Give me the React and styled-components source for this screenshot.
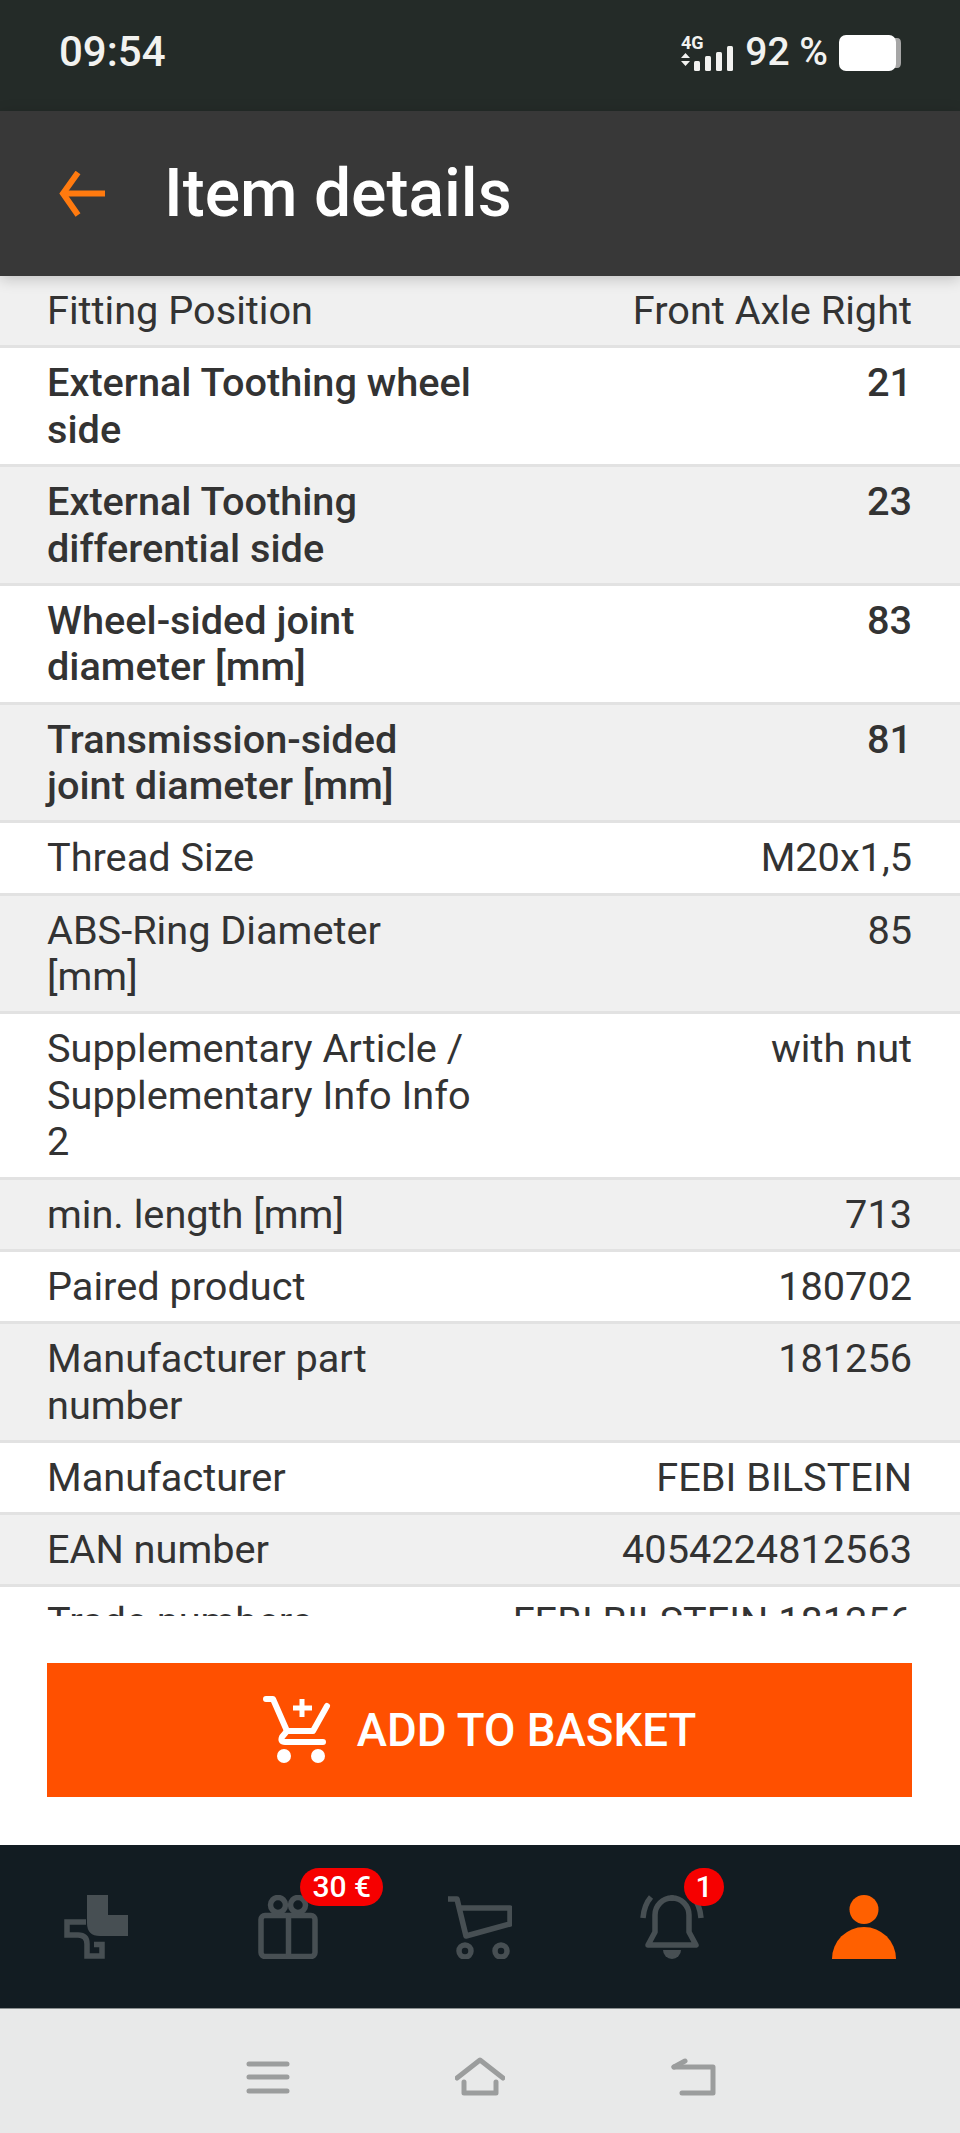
import styled, { createGlobalStyle } from 'styled-components';

const GlobalStyle = createGlobalStyle`
	html,
	body {
		margin: 0;
		padding: 0;
		background: #fff;
	}

	* {
		box-sizing: border-box;
	}
`;

const Screen = styled.div`
	width: 960px;
	height: 2133px;
	display: flex;
	flex-direction: column;
	font-family: Roboto, 'Liberation Sans', sans-serif;
	color: #333;
	overflow: hidden;
`;

const StatusBar = styled.div`
	flex: 0 0 111px;
	background: #242b28;
	color: #f2f2f0;
	display: flex;
	align-items: flex-start;
	justify-content: space-between;
	padding: 29px 58px 0 59px;
`;

const StatusTime = styled.div`
	font-size: 42px;
	line-height: 46px;
	font-weight: 500;
`;

const StatusRight = styled.div`
	display: flex;
	align-items: flex-start;
	gap: 10px;
`;

const StatusPercent = styled.div`
	font-size: 39px;
	line-height: 46px;
	font-weight: 500;
`;

const Header = styled.header`
	flex: 0 0 165px;
	background: #383838;
	display: flex;
	align-items: center;
	gap: 57px;
	padding-left: 59px;
	position: relative;
	z-index: 2;
	box-shadow: 0 3px 14px rgba(0, 0, 0, 0.2);
`;

const Title = styled.h1`
	margin: 0;
	color: #fff;
	font-size: 66px;
	line-height: 72px;
	font-weight: 500;
`;

const List = styled.div`
	flex: 1 1 0;
	min-height: 0;
	overflow: hidden;
`;

const Row = styled.div`
	display: grid;
	grid-template-columns: 1fr 1fr;
	padding: 12px 48px 10.75px 47px;
	border-bottom: 3px solid #e2e2e2;
	background: ${({ $shaded }) => ($shaded ? '#f0f0f0' : '#fff')};
	font-size: 39.7px;
	line-height: 46.5px;
	font-weight: ${({ $strong }) => ($strong ? 500 : 400)};
`;

const Value = styled.div`
	text-align: right;
`;

const Footer = styled.div`
	flex: 0 0 229px;
	background: #fff;
	padding: 47px 48px 48px 47px;
`;

const BasketButton = styled.button`
	width: 100%;
	height: 134px;
	border: 0;
	background: #ff5000;
	color: #fff;
	display: flex;
	align-items: center;
	justify-content: center;
	gap: 26px;
	font-family: inherit;
	font-size: 45.6px;
	font-weight: 500;
	padding: 0;
`;

const BottomNav = styled.nav`
	flex: 0 0 164px;
	background: #121c22;
	display: grid;
	grid-template-columns: repeat(5, 1fr);
	padding-top: 50px;
	border-bottom: 1px solid #8a8f90;
`;

const NavItem = styled.div`
	justify-self: center;
	position: relative;
	width: 64px;
	height: 64px;
`;

const Badge = styled.span`
	position: absolute;
	top: -27px;
	right: ${({ $wide }) => ($wide ? '-63px' : '-20px')};
	min-width: 40px;
	height: 38px;
	padding: 0 ${({ $wide }) => ($wide ? '12px' : '0')};
	border-radius: 19px;
	background: #f60000;
	color: #fff;
	font-size: 30px;
	font-weight: 500;
	line-height: 38px;
	text-align: center;
	white-space: nowrap;
`;

const SystemBar = styled.div`
	flex: 0 0 124px;
	background: #e8e9e9;
	display: flex;
	justify-content: center;
	gap: 163px;
	padding-top: 48px;
`;

const rows = [
	{ label: 'Fitting Position', value: 'Front Axle Right' },
	{ label: 'External Toothing wheel side', value: '21', strong: true },
	{ label: 'External Toothing differential side', value: '23', strong: true },
	{ label: 'Wheel-sided joint diameter [mm]', value: '83', strong: true },
	{ label: 'Transmission-sided joint diameter [mm]', value: '81', strong: true },
	{ label: 'Thread Size', value: 'M20x1,5' },
	{ label: 'ABS-Ring Diameter [mm]', value: '85' },
	{ label: 'Supplementary Article / Supplementary Info Info 2', value: 'with nut' },
	{ label: 'min. length [mm]', value: '713' },
	{ label: 'Paired product', value: '180702' },
	{ label: 'Manufacturer part number', value: '181256' },
	{ label: 'Manufacturer', value: 'FEBI BILSTEIN' },
	{ label: 'EAN number', value: '4054224812563' },
	{ label: 'Trade numbers', value: 'FEBI BILSTEIN 181256' },
];

const SignalIcon = () => (
	<svg width="54" height="36" viewBox="0 0 54 36" style={{ marginTop: 8, overflow: 'visible' }}>
		<text x="0" y="12" fontSize="18" fontWeight="700" fill="#f2f2f0" fontFamily="Roboto, sans-serif">4G</text>
		<path d="M0 21 L4.5 16 L9 21 Z M0 24 L4.5 29 L9 24 Z" fill="#f2f2f0" />
		<rect x="13" y="24" width="6" height="10" rx="1.5" fill="#f2f2f0" />
		<rect x="24" y="19" width="6" height="15" rx="1.5" fill="#f2f2f0" />
		<rect x="35" y="15" width="6" height="19" rx="1.5" fill="#f2f2f0" />
		<rect x="46" y="9" width="6" height="25" rx="1.5" fill="#f2f2f0" />
	</svg>
);

const BatteryIcon = () => (
	<svg width="64" height="38" viewBox="0 0 64 38" style={{ marginTop: 5 }}>
		<path d="M56 4 H59 Q63 4 63 9 V29 Q63 34 59 34 H56 Z" fill="#a6a6a6" />
		<rect x="1" y="1" width="57" height="36" rx="7" fill="#fff" />
	</svg>
);

const BackArrow = () => (
	<svg width="48" height="46" viewBox="0 0 48 46" fill="none" stroke="#ff7a0f" strokeWidth="6">
		<path d="M46 22.5 H5" />
		<path d="M19 1.5 L4 22.5 L19 44" />
	</svg>
);

const AddToCartIcon = () => (
	<svg width="68" height="68" viewBox="0 0 68 68" fill="none" stroke="#fff" strokeWidth="6" strokeLinecap="round" strokeLinejoin="round">
		<path d="M3 3 H10 L24 35 H50 L64 10" />
		<path d="M24 35 L19 41 Q17 46 22 46 H60" />
		<path d="M39 3 V21 M30 12 H49" strokeWidth="5" strokeLinecap="butt" />
		<circle cx="21" cy="60" r="7" fill="#fff" stroke="none" />
		<circle cx="55" cy="60" r="7" fill="#fff" stroke="none" />
	</svg>
);

const iconStroke = {
	fill: 'none',
	stroke: '#474f53',
	strokeWidth: 5.5,
};

const PartIcon = () => (
	<svg width="64" height="64" viewBox="0 0 64 64" {...iconStroke}>
		<path d="M23 0 H44 V20 H64 V41 H36 Q23 41 23 28 Z" fill="#474f53" stroke="none" />
		<path d="M22 27 H3 V40 H14 Q23 40 23 49 V61 H38 V49.5 H30" />
	</svg>
);

const GiftIcon = () => (
	<svg width="64" height="64" viewBox="0 0 64 64" {...iconStroke}>
		<circle cx="22" cy="10" r="7.5" />
		<circle cx="42" cy="10" r="7.5" />
		<rect x="5" y="20.5" width="54" height="41" rx="4" />
		<path d="M32.5 21 V61" />
	</svg>
);

const CartIcon = () => (
	<svg width="64" height="64" viewBox="2 0 64 64" {...iconStroke} strokeLinejoin="round">
		<path d="M2 4 H11 L20 41 L64 29 V13 H14" />
		<circle cx="19" cy="56" r="6" />
		<circle cx="55" cy="56" r="6" />
	</svg>
);

const BellIcon = () => (
	<svg width="64" height="64" viewBox="0 0 64 64" {...iconStroke}>
		<path d="M15 37 V20 A17 17 0 0 1 49 20 V37 L56 50 H8 Z" strokeLinejoin="round" />
		<circle cx="32" cy="3" r="3" fill="#474f53" stroke="none" />
		<path d="M23 55 H41 A9 9 0 0 1 23 55 Z" fill="#474f53" stroke="none" />
		<path d="M3 23 Q4 10 11 2 M61 23 Q60 10 53 2" />
	</svg>
);

const PersonIcon = () => (
	<svg width="64" height="64" viewBox="0 0 64 64" fill="#ff6000">
		<circle cx="32" cy="14.5" r="14.5" />
		<path d="M0 64 A32 32 0 0 1 64 64 Z" />
	</svg>
);

const systemIcon = {
	width: 50,
	height: 40,
	viewBox: '0 0 50 40',
	fill: 'none',
	stroke: '#9b9d9d',
	strokeWidth: 5,
	strokeLinecap: 'round',
	strokeLinejoin: 'round',
};

const MenuKey = () => (
	<svg {...systemIcon}>
		<path d="M7 7 H45 M7 20 H45 M7 34 H45" />
	</svg>
);

const HomeKey = () => (
	<svg {...systemIcon}>
		<path d="M2 21 L25 3 L48 21" />
		<path d="M9 25 V36 H41 V25" />
	</svg>
);

const BackKey = () => (
	<svg {...systemIcon}>
		<path d="M6 10 H45 V36 H14" />
		<path d="M6 10 L17 4" />
	</svg>
);

const App = () => (
	<>
		<GlobalStyle />
		<Screen>
			<StatusBar>
				<StatusTime>09:54</StatusTime>
				<StatusRight>
					<SignalIcon />
					<StatusPercent>92 %</StatusPercent>
					<BatteryIcon />
				</StatusRight>
			</StatusBar>
			<Header>
				<BackArrow />
				<Title>Item details</Title>
			</Header>
			<List>
				{rows.map((row, index) => (
					<Row key={row.label} $shaded={index % 2 === 0} $strong={row.strong}>
						<div>{row.label}</div>
						<Value>{row.value}</Value>
					</Row>
				))}
			</List>
			<Footer>
				<BasketButton>
					<AddToCartIcon />
					ADD TO BASKET
				</BasketButton>
			</Footer>
			<BottomNav>
				<NavItem>
					<PartIcon />
				</NavItem>
				<NavItem>
					<GiftIcon />
					<Badge $wide>30 €</Badge>
				</NavItem>
				<NavItem>
					<CartIcon />
				</NavItem>
				<NavItem>
					<BellIcon />
					<Badge>1</Badge>
				</NavItem>
				<NavItem>
					<PersonIcon />
				</NavItem>
			</BottomNav>
			<SystemBar>
				<MenuKey />
				<HomeKey />
				<BackKey />
			</SystemBar>
		</Screen>
	</>
);

export default App;
